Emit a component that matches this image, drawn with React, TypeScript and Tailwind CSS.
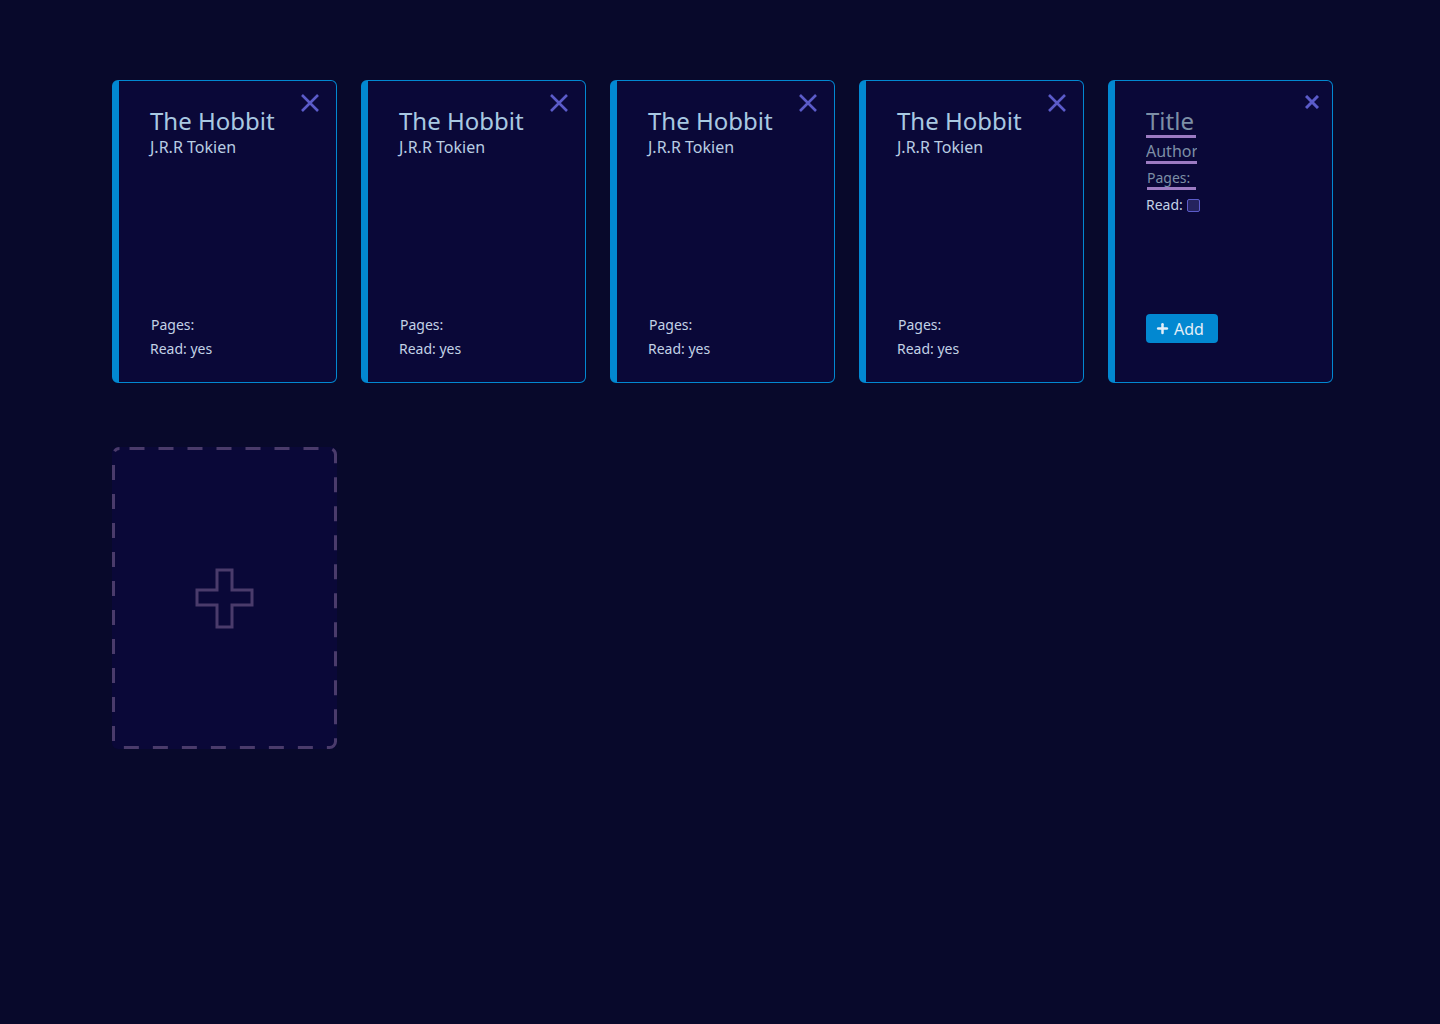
import { Plus } from "lucide-react";

type Book = { title: string; author: string; pages: string; read: string };

const books: Book[] = [
  { title: "The Hobbit", author: "J.R.R Tokien", pages: "", read: "yes" },
  { title: "The Hobbit", author: "J.R.R Tokien", pages: "", read: "yes" },
  { title: "The Hobbit", author: "J.R.R Tokien", pages: "", read: "yes" },
  { title: "The Hobbit", author: "J.R.R Tokien", pages: "", read: "yes" },
];

function Cross({ size, stroke }: { size: number; stroke: number }) {
  return (
    <svg width={size} height={size} viewBox={`0 0 ${size} ${size}`} fill="none">
      <path d={`M1 1 L${size - 1} ${size - 1} M${size - 1} 1 L1 ${size - 1}`} stroke="#5b5bc9" strokeWidth={stroke} />
    </svg>
  );
}

function BookCard({ book }: { book: Book }) {
  return (
    <div className="relative h-[303px] rounded-md border border-[#0288d1] border-l-[7px] bg-[#0a0838] pl-[31px] pr-4 pt-[25px] pb-[21px] flex flex-col">
      <button className="absolute right-[17px] top-[13px]">
        <Cross size={18} stroke={2.6} />
      </button>
      <div className="text-[24px] leading-[30px] text-[#a9c9e2]">{book.title}</div>
      <div className="text-[16px] leading-5 mt-[1px] text-[#b9cde3]">{book.author}</div>
      <div className="mt-auto text-[14px] leading-6 text-[#c3d2e6]">
        <div className="pl-[1px]">Pages: {book.pages}</div>
        <div>Read: {book.read}</div>
      </div>
    </div>
  );
}

function NewBookCard() {
  return (
    <div className="relative h-[303px] rounded-md border border-[#0288d1] border-l-[7px] bg-[#0a0838] pl-[31px] pr-4 pt-[26px] flex flex-col items-start">
      <button className="absolute right-[13px] top-[14px]">
        <Cross size={14} stroke={3} />
      </button>
      <input
        placeholder="Title"
        className="w-[50px] bg-transparent border-b-[3px] border-[#9c7bc2] text-[24px] leading-[28px] text-[#7d8fa6] placeholder:text-[#7d8fa6] outline-none"
      />
      <input
        placeholder="Author"
        className="mt-[3px] w-[51px] bg-transparent border-b-[3px] border-[#9c7bc2] text-[16px] leading-[20px] text-[#7d8fa6] placeholder:text-[#7d8fa6] outline-none"
      />
      <input
        placeholder="Pages:"
        className="mt-[5px] ml-[1px] w-[49px] bg-transparent border-b-[3px] border-[#9c7bc2] text-[14px] leading-[18px] text-[#7d8fa6] placeholder:text-[#7d8fa6] outline-none"
      />
      <label className="mt-[5px] flex items-center gap-[4px] text-[14px] leading-5 text-[#c3d2e6]">
        Read:
        <span className="inline-block w-[13px] h-[13px] rounded-[2px] border border-[#5b5bc9] bg-[#25235e]" />
      </label>
      <button className="mt-[99px] h-[29px] w-[72px] rounded-[4px] bg-[#0288d1] flex items-center pl-[9px] gap-[4px] text-[16px] text-[#e3eef8]">
        <Plus size={15} strokeWidth={4} />
        Add
      </button>
    </div>
  );
}

function AddPlaceholder() {
  return (
    <div className="relative h-[302px] rounded-md bg-[#0a0838] flex items-center justify-center">
      <svg className="absolute inset-0" width="225" height="302" fill="none">
        <rect
          x="1.5"
          y="1.5"
          width="222"
          height="299"
          rx="6"
          stroke="#4a3b6b"
          strokeWidth="3"
          strokeDasharray="15 14"
          strokeDashoffset="-10"
        />
      </svg>
      <svg width="60" height="61" viewBox="0 0 60 61" fill="none">
        <path
          d="M22 2 H37 V22 H57 V37 H37 V59 H22 V37 H2 V22 H22 Z"
          stroke="#4a3b6b"
          strokeWidth="3"
        />
      </svg>
    </div>
  );
}

export default function App() {
  return (
    <div
      className="min-h-[1024px] w-full bg-[#08092b] pl-[112px] pt-[80px]"
      style={{ fontFamily: '"Noto Sans", "Open Sans", sans-serif' }}
    >
      <div className="grid grid-cols-[repeat(5,225px)] gap-x-6 gap-y-16">
        {books.map((b, i) => (
          <BookCard key={i} book={b} />
        ))}
        <NewBookCard />
        <AddPlaceholder />
      </div>
    </div>
  );
}
